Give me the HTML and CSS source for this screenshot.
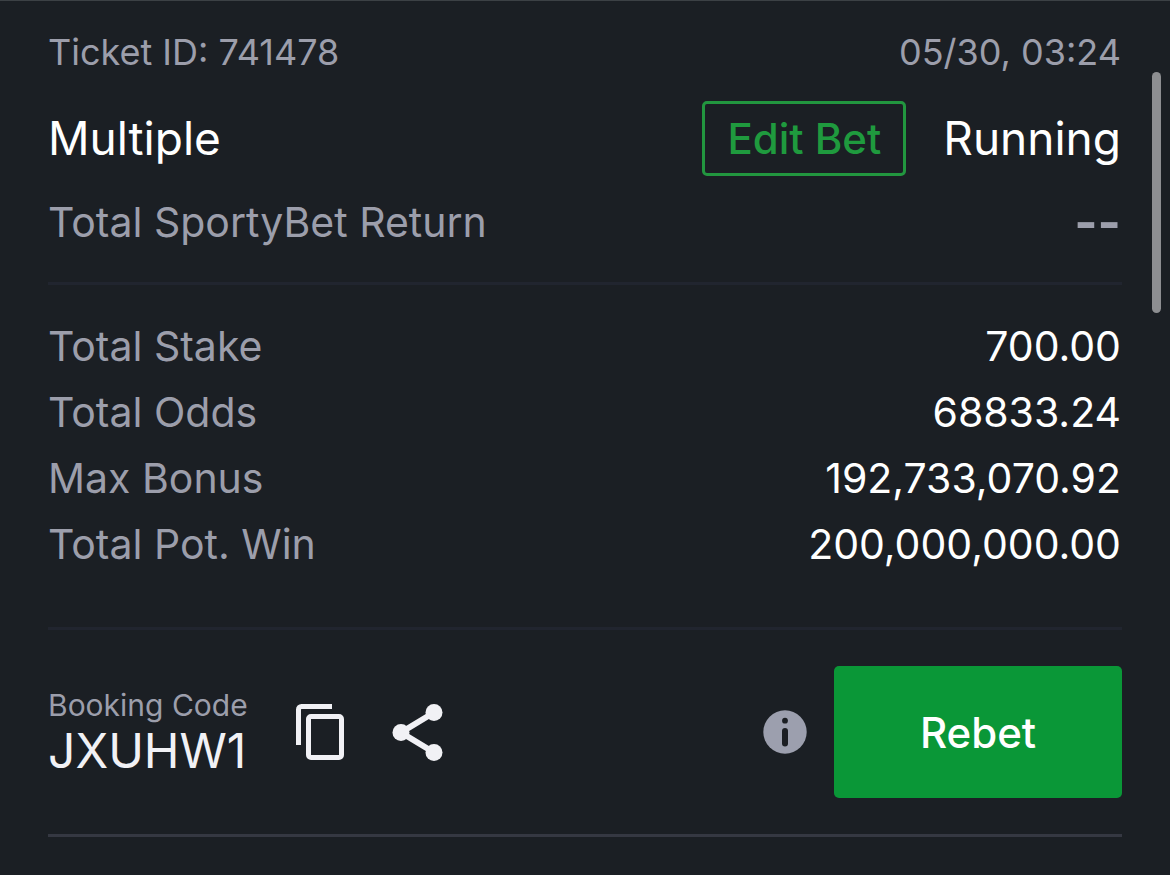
FILE: index.html
```html
<!DOCTYPE html>
<html lang="en">
<head>
    <meta charset="UTF-8">
    <meta name="viewport" content="width=device-width, initial-scale=1.0">
    <title>Ticket Details</title>
    <link rel="stylesheet" href="styles.css">
</head>
<body>
    <main class="ticket">
        <header class="summary">
            <div class="row meta">
                <span>Ticket ID: 741478</span>
                <time datetime="05-30T03:24">05/30, 03:24</time>
            </div>
            <div class="row status">
                <h1 class="title">Multiple</h1>
                <button class="edit-btn" type="button">Edit Bet</button>
                <span class="title">Running</span>
            </div>
            <div class="row return">
                <span>Total SportyBet Return</span>
                <span class="pending">--</span>
            </div>
        </header>

        <dl class="totals">
            <div class="row">
                <dt>Total Stake</dt>
                <dd>700.00</dd>
            </div>
            <div class="row">
                <dt>Total Odds</dt>
                <dd>68833.24</dd>
            </div>
            <div class="row">
                <dt>Max Bonus</dt>
                <dd>192,733,070.92</dd>
            </div>
            <div class="row">
                <dt>Total Pot. Win</dt>
                <dd>200,000,000.00</dd>
            </div>
        </dl>

        <footer class="booking">
            <div class="code">
                <span class="code-label">Booking Code</span>
                <span class="code-value">JXUHW1</span>
            </div>
            <button class="icon-btn" type="button" aria-label="Copy booking code">
                <svg width="48" height="56" viewBox="0 0 48 56" fill="none" stroke="#f1f1f5" stroke-width="5">
                    <path d="M2.5 41V5.5a3 3 0 0 1 3-3H36"/>
                    <rect x="12.5" y="12.5" width="33" height="41" rx="2.5"/>
                </svg>
            </button>
            <button class="icon-btn" type="button" aria-label="Share">
                <svg width="52" height="58" viewBox="0 0 52 58" fill="#f1f1f5">
                    <path d="M42 9.5L9 29.5l33 20" fill="none" stroke="#f1f1f5" stroke-width="6"/>
                    <circle cx="42" cy="9.5" r="8.5"/>
                    <circle cx="9" cy="29.5" r="8.5"/>
                    <circle cx="42" cy="49.5" r="8.5"/>
                </svg>
            </button>
            <button class="icon-btn info-btn" type="button" aria-label="Rebet info">
                <svg width="44" height="44" viewBox="0 0 44 44">
                    <circle cx="22" cy="22" r="21.7" fill="#9c9fae"/>
                    <circle cx="22" cy="10.7" r="2.9" fill="#1b1e23"/>
                    <path d="M22 21v12.5" stroke="#1b1e23" stroke-width="6" stroke-linecap="round"/>
                </svg>
            </button>
            <button class="rebet-btn" type="button">Rebet</button>
        </footer>
    </main>
    <div class="scroll-thumb"></div>
</body>
</html>
```
FILE: styles.css
```css
* {
    box-sizing: border-box;
}
body {
    margin: 0;
    min-height: 100vh;
    background: #1b1f24;
    border-top: 1px solid #3c4145;
    color: #9c9eab;
    font-family: Inter, "Liberation Sans", sans-serif;
    font-size: 41px;
}
button {
    padding: 0;
    border: none;
    background: none;
    font-family: inherit;
    font-size: 42px;
    font-weight: 500;
    cursor: pointer;
}
.ticket {
    padding: 0 48px;
}
.row {
    display: flex;
    justify-content: space-between;
    align-items: center;
    padding: 0 1px 0 0;
}
.summary {
    padding: 29px 0 35px;
    border-bottom: 3px solid #21252f;
}
.meta {
    font-size: 36px;
    line-height: 44px;
}
.status {
    gap: 37px;
    margin: 27px 0 21px;
}
.title {
    margin: 0;
    color: #fff;
    font-size: 46px;
    font-weight: 400;
    line-height: 75px;
}
.edit-btn {
    height: 75px;
    margin-left: auto;
    padding: 0 22px;
    border: 3px solid #22963f;
    border-radius: 5px;
    color: #1f9a3e;
}
.return {
    line-height: 50px;
}
.pending {
    font-size: 50px;
    font-weight: 700;
}
/* Stake, odds and winnings */
.totals {
    margin: 0;
    padding: 28px 0 50px;
    border-bottom: 3px solid #21252f;
    line-height: 66px;
}
.totals dd {
    margin: 0;
    color: #fff;
}
.booking {
    display: flex;
    align-items: center;
    gap: 48px;
    padding: 36px 0;
    border-bottom: 3px solid #353842;
}
.code {
    display: flex;
    flex-direction: column;
    padding-bottom: 2px;
}
.code-label {
    font-size: 30px;
    line-height: 40px;
}
.code-value {
    color: #f1f1f5;
    font-size: 48px;
    line-height: 52px;
}
.icon-btn {
    display: flex;
}
.info-btn {
    margin: 0 -21px 0 auto;
}
.rebet-btn {
    width: 288px;
    height: 132px;
    border-radius: 5px;
    background: #0a9737;
    color: #fff;
}
/* Overlay scrollbar */
.scroll-thumb {
    position: absolute;
    top: 72px;
    right: 9px;
    width: 9px;
    height: 241px;
    border-radius: 5px;
    background: #8d8e91;
}
```
